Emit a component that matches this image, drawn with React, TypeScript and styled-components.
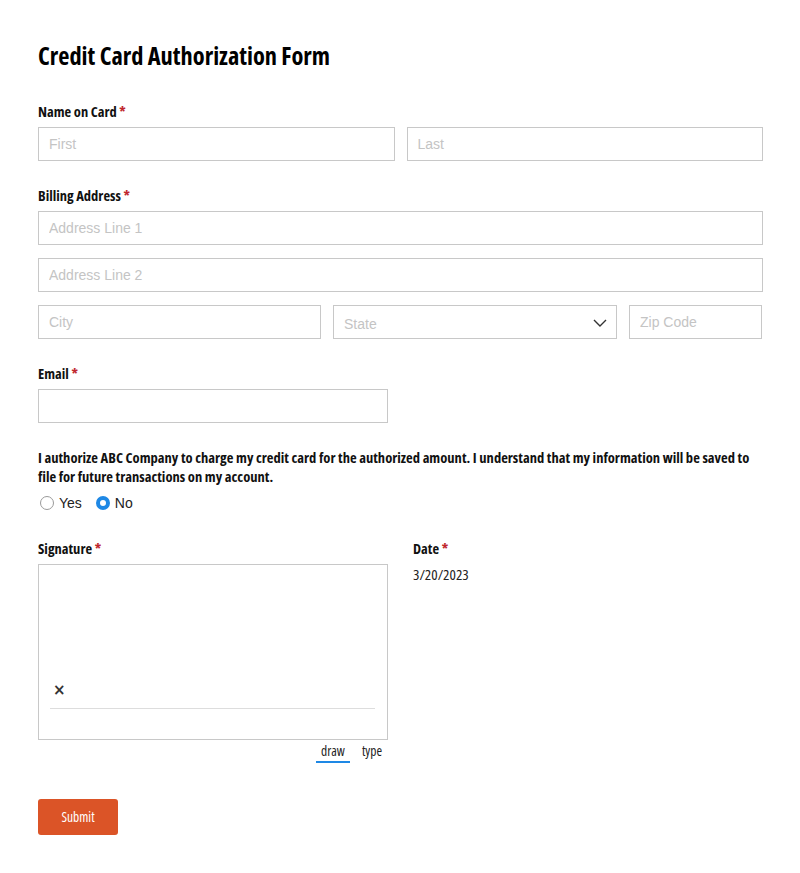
import React, { FunctionComponent, useState } from "react";
import styled, { createGlobalStyle } from "styled-components";

const GlobalStyle = createGlobalStyle`
  body {
    margin: 0;
    background: #fff;
    font-family: "Liberation Sans", Arial, sans-serif;
  }
`;

const condensed = `
  font-family: "Open Sans", "DejaVu Sans", sans-serif;
  font-stretch: 75%;
  font-weight: 700;
`;

const App: FunctionComponent = () => {
  const [consent, setConsent] = useState("no");
  const [mode, setMode] = useState("draw");

  return (
    <Page>
      <GlobalStyle />
      <Title>Credit Card Authorization Form</Title>

      <Field>
        <Label>Name on Card <Req>*</Req></Label>
        <Row cols="1fr 1fr">
          <Input placeholder="First" />
          <Input placeholder="Last" />
        </Row>
      </Field>

      <Field>
        <Label>Billing Address <Req>*</Req></Label>
        <Stack>
          <Input placeholder="Address Line 1" />
          <Input placeholder="Address Line 2" />
          <Row cols="283px 284px 133px">
            <Input placeholder="City" />
            <SelectWrap>
              <Select defaultValue="">
                <option value="" disabled>State</option>
              </Select>
              <Chevron viewBox="0 0 14 8" width="14" height="8">
                <path d="M1 1l6 6 6-6" fill="none" stroke="#333" strokeWidth="1.4" />
              </Chevron>
            </SelectWrap>
            <Input placeholder="Zip Code" />
          </Row>
        </Stack>
      </Field>

      <Field>
        <Label>Email <Req>*</Req></Label>
        <Input width={350} />
      </Field>

      <Field>
        <Consent>
          I authorize ABC Company to charge my credit card for the authorized amount. I understand that my
          information will be saved to file for future transactions on my account.
        </Consent>
        <Radios>
          <RadioLabel onClick={() => setConsent("yes")}>
            <RadioDot checked={consent === "yes"} />
            Yes
          </RadioLabel>
          <RadioLabel onClick={() => setConsent("no")}>
            <RadioDot checked={consent === "no"} />
            No
          </RadioLabel>
        </Radios>
      </Field>

      <SignRow>
        <div>
          <Label>Signature <Req>*</Req></Label>
          <SigBox>
            <SigX>×</SigX>
            <SigLine />
          </SigBox>
          <Tabs>
            <Tab active={mode === "draw"} onClick={() => setMode("draw")}>draw</Tab>
            <Tab active={mode === "type"} onClick={() => setMode("type")}>type</Tab>
          </Tabs>
        </div>
        <div>
          <Label>Date <Req>*</Req></Label>
          <DateValue>3/20/2023</DateValue>
        </div>
      </SignRow>

      <Submit>Submit</Submit>
    </Page>
  );
};

// STYLED COMPONENTS //
const Page = styled.div`
  width: 725px;
  padding: 40px 0 40px 38px;
`;

const Title = styled.h1`
  ${condensed}
  font-size: 24.4px;
  line-height: 32px;
  margin: 0 0 30px;
  color: #000;
`;

const Field = styled.div`
  margin-bottom: 25px;
`;

const Label = styled.div`
  ${condensed}
  font-size: 14.5px;
  line-height: 20px;
  color: #111;
  margin-bottom: 5px;
`;

const Req = styled.span`
  color: #c0272d;
`;

const Stack = styled.div`
  display: flex;
  flex-direction: column;
  gap: 13px;
`;

const Row = styled.div<{ cols: string }>`
  display: grid;
  grid-template-columns: ${(p) => p.cols};
  gap: 12px;
`;

const Input = styled.input<{ width?: number }>`
  box-sizing: border-box;
  width: ${(p) => (p.width ? `${p.width}px` : "100%")};
  height: 34px;
  border: 1px solid #c8c8c8;
  border-radius: 0;
  padding: 0 10px;
  font-family: "Liberation Sans", Arial, sans-serif;
  font-size: 14px;
  color: #333;
  outline: none;
  &::placeholder {
    color: #c4c4c4;
  }
`;

const SelectWrap = styled.div`
  position: relative;
`;

const Select = styled.select`
  box-sizing: border-box;
  width: 100%;
  height: 34px;
  border: 1px solid #c8c8c8;
  border-radius: 0;
  background: #fff;
  padding: 3px 10px 0;
  appearance: none;
  font-family: "Liberation Sans", Arial, sans-serif;
  font-size: 14px;
  color: #c4c4c4;
  outline: none;
`;

const Chevron = styled.svg`
  position: absolute;
  right: 10px;
  top: 14px;
  pointer-events: none;
`;

const Consent = styled.p`
  ${condensed}
  font-size: 14.55px;
  line-height: 19px;
  color: #111;
  margin: 0 0 9px;
  padding-right: 8px;
`;

const Radios = styled.div`
  display: flex;
  gap: 14px;
  margin-left: 2px;
`;

const RadioLabel = styled.label`
  display: flex;
  align-items: center;
  gap: 5px;
  font-family: "Liberation Sans", Arial, sans-serif;
  font-size: 14px;
  color: #222;
  cursor: pointer;
`;

const RadioDot = styled.span<{ checked: boolean }>`
  box-sizing: border-box;
  width: 14px;
  height: 14px;
  border-radius: 50%;
  background: #fff;
  border: ${(p) => (p.checked ? "4px solid #1e88e5" : "1px solid #9a9a9a")};
`;

const SignRow = styled.div`
  display: grid;
  grid-template-columns: 350px 1fr;
  gap: 25px;
  margin-top: 28px;
`;

const SigBox = styled.div`
  box-sizing: border-box;
  height: 176px;
  border: 1px solid #c8c8c8;
  display: flex;
  flex-direction: column;
  justify-content: flex-end;
  padding: 0 12px 30px 11px;
`;

const SigX = styled.div`
  font-family: "DejaVu Sans", sans-serif;
  font-weight: 700;
  font-size: 15px;
  line-height: 16px;
  color: #333;
  margin: 0 0 10px 3px;
`;

const SigLine = styled.div`
  height: 1px;
  background: #ddd;
`;

const Tabs = styled.div`
  display: flex;
  justify-content: flex-end;
  gap: 7px;
  padding-right: 1px;
  margin-top: 4px;
`;

const Tab = styled.button<{ active: boolean }>`
  ${condensed}
  font-weight: 400;
  font-size: 13.5px;
  line-height: 15px;
  background: none;
  border: none;
  padding: 0 5px 2px;
  color: #222;
  border-bottom: 2px solid ${(p) => (p.active ? "#1e88e5" : "transparent")};
  cursor: pointer;
`;

const DateValue = styled.div`
  font-family: "Open Sans", Roboto, sans-serif;
  font-stretch: 75%;
  font-size: 15px;
  color: #222;
  margin-top: 1px;
`;

const Submit = styled.button`
  ${condensed}
  font-weight: 400;
  margin-top: 36px;
  width: 80px;
  height: 36px;
  border: none;
  border-radius: 3px;
  background: #db5427;
  color: #fff;
  font-size: 13.5px;
  cursor: pointer;
`;

export default App;
